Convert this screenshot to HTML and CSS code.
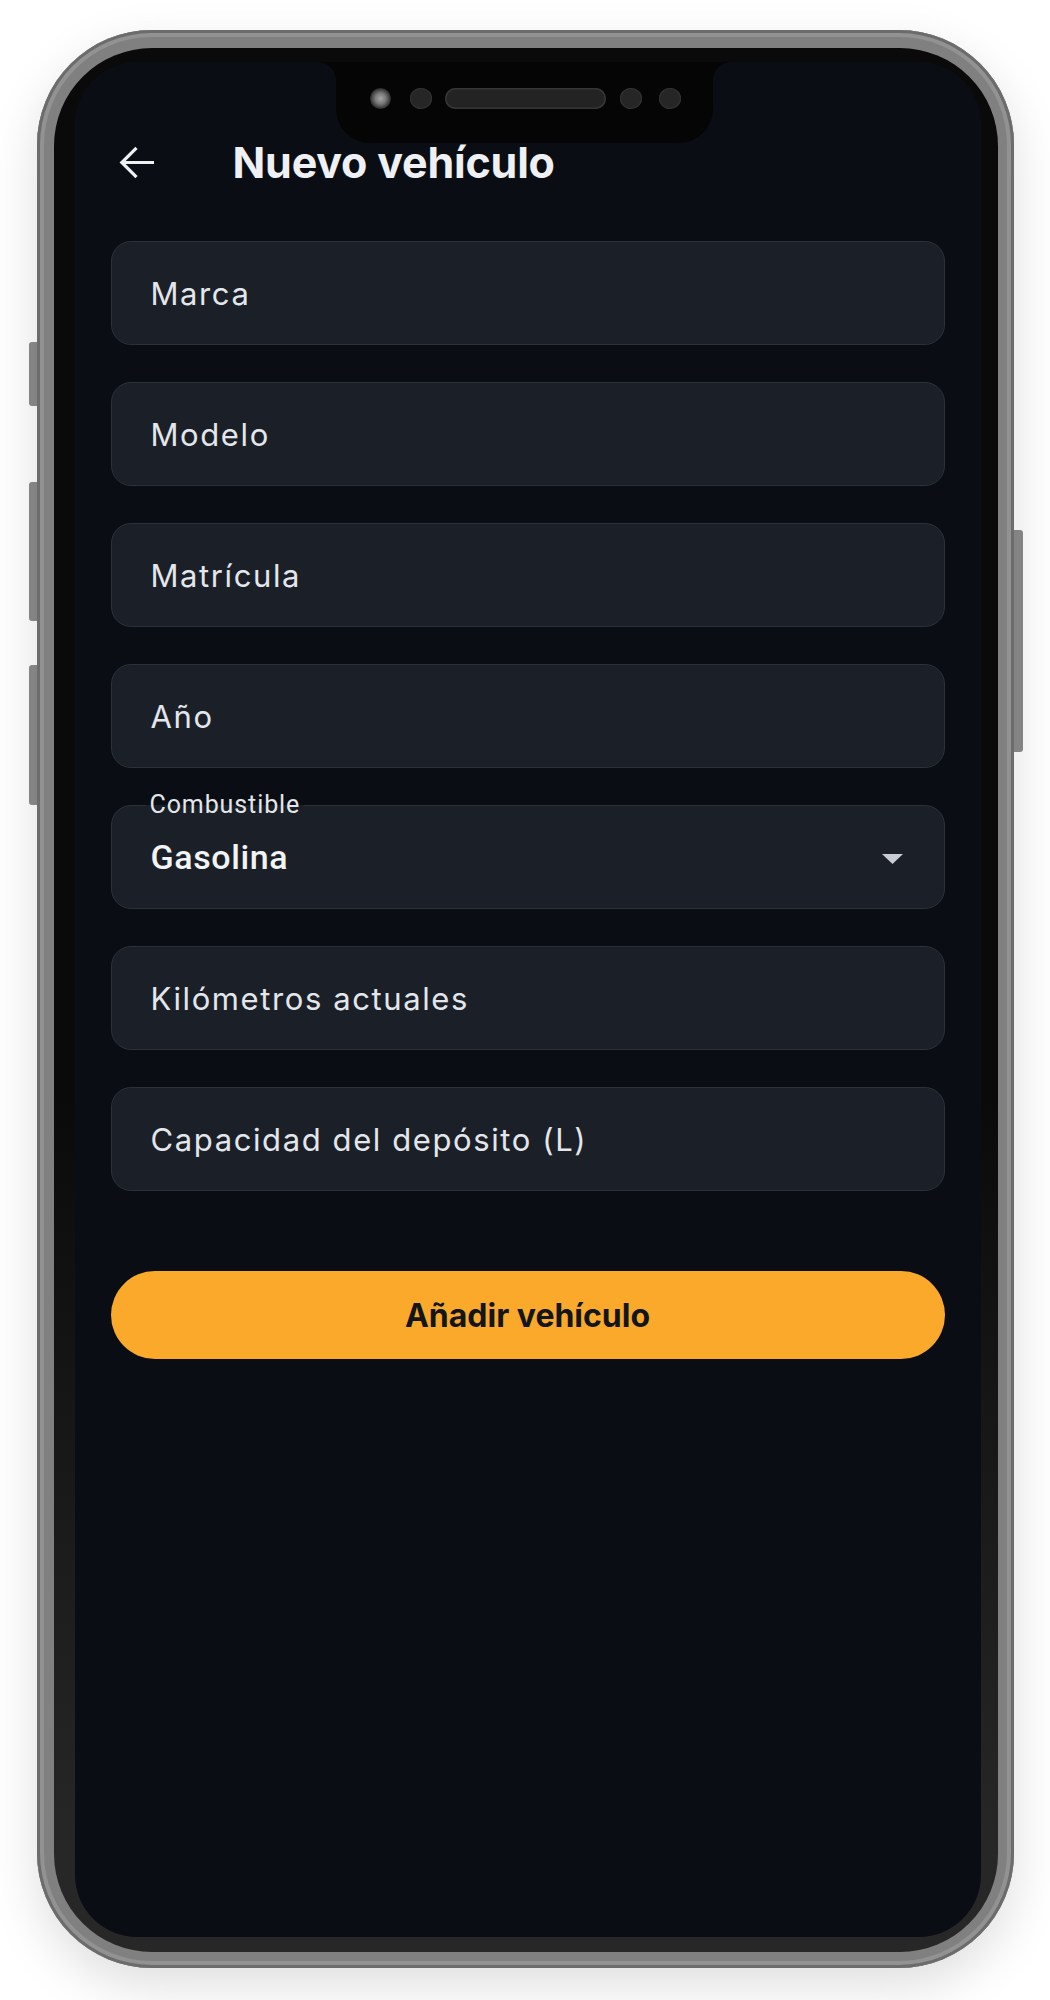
FILE: index.html
```html
<html>
	<head>
	<meta name="viewport" content="width=device-width, initial-scale=1">
	<title>Nuevo vehículo</title>
	<link rel="stylesheet" href="styles.css">
	</head>
	<body>
	<div class="phone">
		<span class="side-btn left btn-mute"></span>
		<span class="side-btn left btn-vol-up"></span>
		<span class="side-btn left btn-vol-down"></span>
		<span class="side-btn right btn-power"></span>
		<div class="bezel">
			<div class="screen">
				<div class="notch">
					<span class="cam"></span>
					<span class="dot dot-2"></span>
					<span class="speaker"></span>
					<span class="dot dot-3"></span>
					<span class="dot dot-4"></span>
				</div>

				<div class="appbar">
					<svg class="back" width="35" height="33" viewBox="0 0 35 33">
						<path d="M35 16.5H3M17.5 1.8L2.8 16.5L17.5 31.2" fill="none" stroke="#eef1f4" stroke-width="3.2"/>
					</svg>
					<h1 class="title">Nuevo vehículo</h1>
				</div>

				<div class="form">
					<div class="fields">
						<div class="field"><span class="hint">Marca</span></div>
						<div class="field"><span class="hint">Modelo</span></div>
						<div class="field"><span class="hint">Matrícula</span></div>
						<div class="field"><span class="hint">Año</span></div>
						<div class="field select">
							<span class="float-label">Combustible</span>
							<span class="value">Gasolina</span>
							<svg class="caret" width="21" height="10" viewBox="0 0 21 10">
								<polygon points="0,0 21,0 10.5,10" fill="#c9cdd3"/>
							</svg>
						</div>
						<div class="field"><span class="hint">Kilómetros actuales</span></div>
						<div class="field"><span class="hint">Capacidad del depósito (L)</span></div>
					</div>
					<button class="submit">Añadir vehículo</button>
				</div>
			</div>
		</div>
	</div>
	</body>
</html>
```

FILE: styles.css
```css
body{
	margin: 0;
	background: #ffffff;
	display: flex;
	justify-content: center;
	padding-top: 30px;
}

/* device frame */
.phone{
	position: relative;
	width: 977px;height: 1938px;
	box-sizing: border-box;
	padding: 18px 16px 16px 17px;
	border-radius: 115px;
	background: #808080;
	box-shadow: inset 0 0 0 3px #6c6c6c, inset 0 0 0 7px #929292, 0 18px 50px rgba(0,0,0,0.13);
}
.side-btn{
	position: absolute;
	width: 10px;
	background: #8c8c8c;
	z-index: -1;
}
.side-btn.left{left: -8px;border-radius: 3px 0 0 3px;}
.side-btn.right{right: -9px;border-radius: 0 3px 3px 0;}
.btn-mute{top: 312px;height: 64px;}
.btn-vol-up{top: 452px;height: 139px;}
.btn-vol-down{top: 635px;height: 140px;}
.btn-power{top: 500px;height: 222px;}

.bezel{
	height: 100%;
	box-sizing: border-box;
	padding: 14px 17px 15px 21px;
	border-radius: 98px;
	background: linear-gradient(to bottom, #0a0a0a 55%, #272727 95%);
}
.screen{
	position: relative;
	height: 100%;
	box-sizing: border-box;
	padding: 60px 36px 0 36px;
	border-radius: 62px;
	background: #0a0e14;
	overflow: hidden;
}

/* notch */
.notch{
	position: absolute;
	top: 0;left: 261px;
	width: 377px;height: 81px;
	box-sizing: border-box;
	padding: 26px 0 0 34px;
	display: flex;
	align-items: flex-start;
	background: #050505;
	border-radius: 0 0 34px 34px;
}
.notch::before, .notch::after{
	content: "";
	position: absolute;
	top: 0;
	width: 18px;height: 18px;
}
.notch::before{left: -18px;background: radial-gradient(circle at 0 100%, transparent 17.5px, #050505 18px);}
.notch::after{right: -18px;background: radial-gradient(circle at 100% 100%, transparent 17.5px, #050505 18px);}
.cam{
	width: 21px;height: 21px;
	border-radius: 50%;
	background: radial-gradient(circle, #a5a5a5 0, #7a7a7a 35%, #2c2c2c 70%);
}
.dot{
	width: 22px;height: 21px;
	border-radius: 50%;
	background: #262626;
	box-shadow: inset 0 0 0 1px #323232;
}
.dot-2{margin-left: 19px;}
.dot-3{margin-left: 14px;}
.dot-4{margin-left: 17px;}
.speaker{
	margin-left: 13px;
	width: 161px;height: 21px;
	border-radius: 11px;
	background: #232323;
	box-shadow: inset 0 0 0 1.5px #363636;
}

/* app bar */
.appbar{
	height: 80px;
	display: flex;
	align-items: center;
	padding-left: 8px;
}
.back{display: block;}
.title{
	margin: 0 0 0 79px;
	font-family: Inter, "Liberation Sans", sans-serif;
	font-weight: 700;
	font-size: 43px;
	letter-spacing: -0.2px;
	color: #eef0f3;
}

/* form */
.form{margin-top: 39px;}
.fields{
	display: flex;
	flex-direction: column;
	gap: 37px;
}
.field{
	position: relative;
	height: 104px;
	box-sizing: border-box;
	display: flex;
	align-items: center;
	padding: 0 40px 0 39px;
	background: #1b2028;
	border: 1.5px solid #2b3139;
	border-radius: 20px;
}
.hint{
	font-family: Inter, "Liberation Sans", sans-serif;
	font-size: 31px;
	letter-spacing: 1.6px;
	color: #e3e6ea;
}
.float-label{
	position: absolute;
	top: -14px;left: 34px;
	padding: 0 4px;
	font-family: Roboto, "Liberation Sans", sans-serif;
	font-size: 25px;
	line-height: 25px;
	letter-spacing: 0.9px;
	color: #e3e6ea;
	background: linear-gradient(to bottom, #0a0e14 13px, #1b2028 13px);
}
.value{
	flex: 1;
	font-family: Roboto, "Liberation Sans", sans-serif;
	font-weight: 500;
	font-size: 34px;
	letter-spacing: 0.6px;
	color: #f1f3f5;
}
.caret{display: block;margin-right: 1px;margin-top: 3px;}

.submit{
	display: block;
	width: 100%;height: 88px;
	margin-top: 80px;
	border: none;
	border-radius: 44px;
	background: #fba92b;
	font-family: Inter, "Liberation Sans", sans-serif;
	font-weight: 700;
	font-size: 32px;
	color: #12151a;
}
```
